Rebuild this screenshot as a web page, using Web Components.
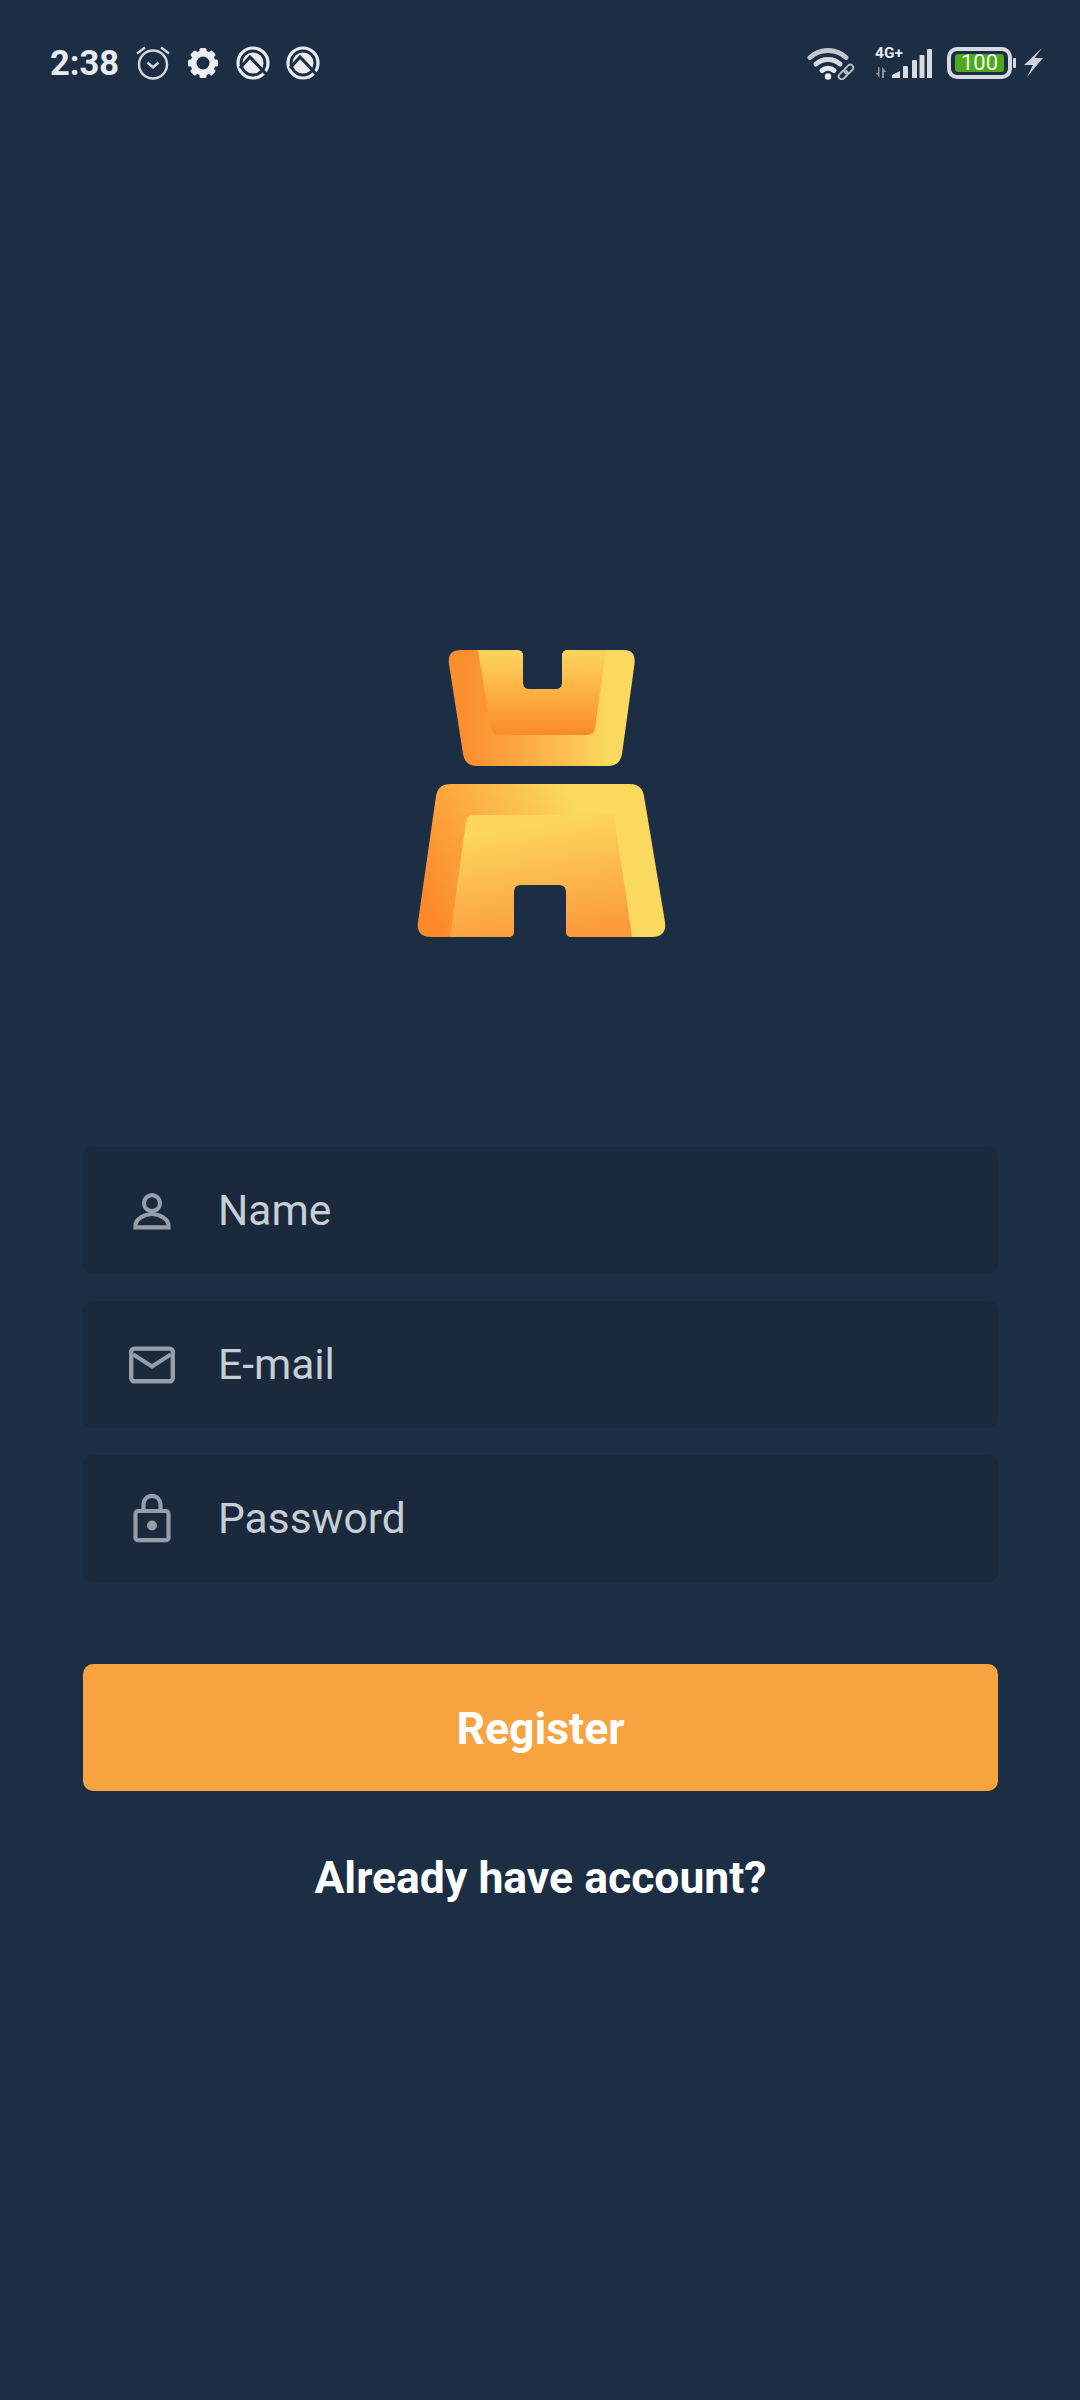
<!DOCTYPE html>
<html>
<head>
<meta charset="utf-8">
<title>Register</title>
<style>
    html, body { margin: 0; padding: 0; background: #1b2e44; }
    body { font-family: Roboto, "Liberation Sans", sans-serif; }
</style>
</head>
<body>
<login-screen>
    <status-bar slot="top" time="2:38"></status-bar>
    <brand-logo></brand-logo>
    <form-field icon="person">Name</form-field>
    <form-field icon="mail">E-mail</form-field>
    <form-field icon="lock">Password</form-field>
    <primary-button>Register</primary-button>
    <text-link>Already have account?</text-link>
</login-screen>

<script>
class LoginScreen extends HTMLElement {
    constructor() {
        super();
        const shadow = this.attachShadow({ mode: "open" });
        shadow.innerHTML = `
            <style>
                :host {
                    display: block;
                    width: 1080px;
                    height: 2400px;
                    background: #1b2e44;
                    overflow: hidden;
                }
                .content {
                    display: flex;
                    flex-direction: column;
                    padding: 0 82px 0 83px;
                }
            </style>
            <slot name="top"></slot>
            <div class="content"><slot></slot></div>
        `;
    }
}

class StatusBar extends HTMLElement {
    constructor() {
        super();
        const shadow = this.attachShadow({ mode: "open" });
        const q = `
            <svg width="34" height="34" viewBox="0 0 34 34">
                <circle cx="17" cy="17" r="15" fill="none" stroke="#e9ebee" stroke-width="3.2"/>
                <circle cx="17" cy="17" r="10.5" fill="#e9ebee"/>
                <path d="M4 22L14 11L33 31" fill="none" stroke="#1b2e44" stroke-width="3.2"/>
            </svg>`;
        const teeth = [0, 45, 90, 135, 180, 225, 270, 315]
            .map((a) => `<rect x="14.5" y="3" width="7" height="6" rx="1.5" transform="rotate(${a} 18 18)"/>`)
            .join("");
        shadow.innerHTML = `
            <style>
                :host {
                    display: flex;
                    justify-content: space-between;
                    align-items: center;
                    height: 126px;
                    padding: 0 37px 0 50px;
                    color: #e9ebee;
                    font-family: Roboto, "Liberation Sans", sans-serif;
                }
                .left, .right { display: flex; align-items: center; }
                .left { gap: 16px; }
                .time { font-size: 34.5px; font-weight: 700; margin-right: 1px; }
                .gear { margin: 0 -1px; }
                svg { display: block; }
                .right { height: 40px; }
                .net { position: relative; width: 57px; height: 32px; margin: 0 15px 0 20px; }
                .net span {
                    position: absolute;
                    left: 0;
                    top: -2px;
                    font-size: 15.5px;
                    font-weight: 700;
                    line-height: 16px;
                    color: #e6e8ec;
                }
                .battery {
                    box-sizing: border-box;
                    display: grid;
                    width: 65px;
                    height: 32px;
                    padding: 3px 4px;
                    border: 4px solid #d6d9dd;
                    border-radius: 10px;
                }
                .battery i, .battery b { grid-area: 1 / 1; }
                .battery i { background: #4fa81f; border-radius: 3px; }
                .battery b {
                    font-size: 22px;
                    font-weight: 400;
                    line-height: 18px;
                    text-align: center;
                    color: #f2f8ea;
                }
                .tip { width: 3px; height: 10px; margin: 0 8px 0 1px; background: #d6d9dd; border-radius: 1px; }
            </style>
            <div class="left">
                <span class="time"></span>
                <svg width="34" height="34" viewBox="0 0 34 34">
                    <circle cx="17" cy="18.5" r="14" fill="none" stroke="#d5d9de" stroke-width="2.4"/>
                    <path d="M11.5 16.5L17 21.5L22.5 16.5" fill="none" stroke="#d5d9de" stroke-width="2.4"/>
                    <path d="M1 7.5L9 1.5M33 7.5L25 1.5" fill="none" stroke="#d5d9de" stroke-width="2.4"/>
                </svg>
                <svg class="gear" width="36" height="36" viewBox="0 0 36 36" fill="#eceef0">
                    ${teeth}
                    <circle cx="18" cy="18" r="9.5" fill="none" stroke="#eceef0" stroke-width="6"/>
                </svg>
                ${q}${q}
            </div>
            <div class="right">
                <svg width="48" height="34" viewBox="0 0 48 34" fill="none" stroke-width="5" stroke-linecap="round">
                    <path d="M3 11.5A27 27 0 0 1 39 11.5" stroke="#c4c8ce"/>
                    <path d="M9 18A18 18 0 0 1 33 18" stroke="#d6d9dd"/>
                    <path d="M15 24.5A9.5 9.5 0 0 1 27 24.5" stroke="#e4e6e9"/>
                    <circle cx="21" cy="30.5" r="3.2" fill="#eceef0" stroke="none"/>
                    <g stroke="#b9bec5" stroke-width="1.9" transform="rotate(-45 39 26)">
                        <rect x="30" y="23" width="10" height="6" rx="3"/>
                        <rect x="38" y="23" width="10" height="6" rx="3"/>
                    </g>
                </svg>
                <div class="net">
                    <span>4G+</span>
                    <svg width="57" height="32" viewBox="0 0 57 32">
                        <path d="M3 31V25H1L4.5 20V31ZM7 20H9V26H11.5L7 31Z" transform="matrix(1 0 0 -1 0 51)" fill="#8d949c"/>
                        <path d="M17 31V28L25 24V31ZM28 31V20Q28 19 29 19H32Q33 19 33 20V31ZM37 31V14Q37 13 38 13H41Q42 13 42 14V31ZM44.5 31V9Q44.5 8 45.5 8H48.5Q49.5 8 49.5 9V31ZM52 31V3Q52 2 53 2H56Q57 2 57 3V31Z" fill="#d8dbe0"/>
                    </svg>
                </div>
                <div class="battery"><i></i><b>100</b></div>
                <div class="tip"></div>
                <svg width="19" height="30" viewBox="0 0 19 30">
                    <path d="M18 0L0 17H9L3 29L19 10H10.5Z" fill="#cfd3d8"/>
                </svg>
            </div>
        `;
        shadow.querySelector(".time").textContent = this.getAttribute("time");
    }
}

class BrandLogo extends HTMLElement {
    constructor() {
        super();
        const shadow = this.attachShadow({ mode: "open" });
        shadow.innerHTML = `
            <style>
                :host {
                    display: block;
                    width: 280px;
                    height: 310px;
                    margin: 504px 0 207px 317px;
                }
                svg { display: block; }
            </style>
            <svg width="280" height="310" viewBox="0 0 280 310">
                <defs>
                    <linearGradient id="topOuter" x1="0" y1="0" x2="1" y2="0">
                        <stop offset="0.1" stop-color="#fb8f2e"/>
                        <stop offset="0.55" stop-color="#fcb84a"/>
                        <stop offset="0.85" stop-color="#fbd85e"/>
                    </linearGradient>
                    <linearGradient id="topInner" x1="0" y1="0" x2="0" y2="1">
                        <stop offset="0" stop-color="#fcd65c"/>
                        <stop offset="1" stop-color="#fb8a2a"/>
                    </linearGradient>
                    <linearGradient id="bottomOuter" x1="0" y1="0.65" x2="1" y2="0.35">
                        <stop offset="0" stop-color="#fc8a2a"/>
                        <stop offset="0.35" stop-color="#fcb044"/>
                        <stop offset="0.72" stop-color="#fbd85e"/>
                    </linearGradient>
                    <linearGradient id="bottomInner" x1="0.35" y1="0" x2="0.6" y2="1">
                        <stop offset="0.1" stop-color="#fcd65c"/>
                        <stop offset="1" stop-color="#fb9a3a"/>
                    </linearGradient>
                </defs>
                <path fill="url(#topOuter)" d="M61 20H117Q123 20 123 26V53Q123 59 129 59H156Q162 59 162 53V26Q162 20 168 20H224Q236 20 234.5 34L222 124Q220 136 208 136H77Q65 136 63 124L49 34Q47 20 61 20Z"/>
                <path fill="url(#topInner)" d="M78 20H117Q123 20 123 26V53Q123 59 129 59H156Q162 59 162 53V26Q162 20 168 20H206L195 98Q194 105 187 105H98Q92 105 91 98Z"/>
                <path fill="url(#bottomOuter)" d="M50 154H230Q242 154 244 166L265 292Q267 307 252 307H172Q166 307 166 301V262Q166 255 160 255H120Q114 255 114 262V301Q114 307 108 307H31Q16 307 18 292L36 166Q38 154 50 154Z"/>
                <path fill="url(#bottomInner)" d="M74 185H214L232 307H172Q166 307 166 301V262Q166 255 160 255H120Q114 255 114 262V301Q114 307 108 307H50L66 192Q67 185 74 185Z"/>
            </svg>
        `;
    }
}

const FIELD_ICONS = {
    person: `<svg width="46" height="46" viewBox="0 0 46 46" fill="none" stroke="#959eaa" stroke-width="4.2">
                <circle cx="23" cy="15.2" r="8"/>
                <path d="M6.5 39.4H39.5V37.5C39.5 31 30 26 23 26S6.5 31 6.5 37.5Z"/>
             </svg>`,
    mail: `<svg width="46" height="46" viewBox="0 0 46 46" fill="none" stroke="#959eaa" stroke-width="4.4">
                <rect x="2.2" y="6.6" width="41.6" height="32.6" rx="3"/>
                <path d="M4.3 12.5L23 24.5L41.7 12.5" stroke-width="4"/>
           </svg>`,
    lock: `<svg width="46" height="50" viewBox="0 0 46 50" fill="none" stroke="#959eaa" stroke-width="4.2">
                <rect x="6.5" y="17" width="33" height="29.2" rx="2.5"/>
                <path d="M14.5 17V10.4A8.5 8.5 0 0 1 31.5 10.4V17"/>
                <circle cx="23" cy="31.5" r="5" fill="#959eaa" stroke="none"/>
           </svg>`
};

class FormField extends HTMLElement {
    constructor() {
        super();
        const shadow = this.attachShadow({ mode: "open" });
        shadow.innerHTML = `
            <style>
                :host {
                    display: flex;
                    align-items: center;
                    box-sizing: border-box;
                    height: 127px;
                    margin-bottom: 27px;
                    background: #1a293b;
                    border-radius: 10px;
                    color: #c8ced6;
                    font-size: 42.5px;
                    font-family: Roboto, "Liberation Sans", sans-serif;
                }
                .icon {
                    display: flex;
                    justify-content: center;
                    width: 46px;
                    margin: 0 43px 0 46px;
                }
                svg { display: block; }
            </style>
            <div class="icon"></div>
            <slot></slot>
        `;
        shadow.querySelector(".icon").innerHTML = FIELD_ICONS[this.getAttribute("icon")];
    }
}

class PrimaryButton extends HTMLElement {
    constructor() {
        super();
        const shadow = this.attachShadow({ mode: "open" });
        shadow.innerHTML = `
            <style>
                :host {
                    display: flex;
                    align-items: center;
                    justify-content: center;
                    box-sizing: border-box;
                    height: 127px;
                    margin-top: 55px;
                    padding-top: 2px;
                    background: #f6a340;
                    border-radius: 10px;
                    color: #fff;
                    font-size: 44.5px;
                    font-weight: 700;
                    font-family: Roboto, "Liberation Sans", sans-serif;
                }
            </style>
            <slot></slot>
        `;
    }
}

class TextLink extends HTMLElement {
    constructor() {
        super();
        const shadow = this.attachShadow({ mode: "open" });
        shadow.innerHTML = `
            <style>
                :host {
                    display: block;
                    margin-top: 62px;
                    text-align: center;
                    color: #fff;
                    font-size: 44.5px;
                    font-weight: 700;
                    line-height: 50px;
                    font-family: Roboto, "Liberation Sans", sans-serif;
                }
            </style>
            <slot></slot>
        `;
    }
}

customElements.define("login-screen", LoginScreen);
customElements.define("status-bar", StatusBar);
customElements.define("brand-logo", BrandLogo);
customElements.define("form-field", FormField);
customElements.define("primary-button", PrimaryButton);
customElements.define("text-link", TextLink);
</script>
</body>
</html>
